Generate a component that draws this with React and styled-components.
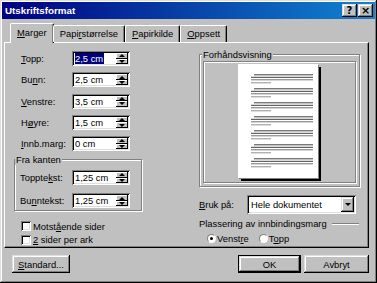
import React from 'react';
import styled, { createGlobalStyle } from 'styled-components';

const GlobalStyle = createGlobalStyle`
  html, body {
    margin: 0;
    padding: 0;
    background: #c0c0c0;
  }
  body {
    font-family: "Liberation Sans", Arial, sans-serif;
    font-size: 9.4px;
    color: #000;
  }
  * { box-sizing: border-box; }
`;

const raised = `
  box-shadow: inset -1px -1px #000, inset 1px 1px #dfdfdf,
    inset -2px -2px #808080, inset 2px 2px #fff;
`;

const sunken = `
  box-shadow: inset 1px 1px #808080, inset -1px -1px #fff,
    inset 2px 2px #000, inset -2px -2px #dfdfdf;
`;

const etched = `
  border: 1px solid #808080;
  box-shadow: 1px 1px 0 #fff, inset 1px 1px 0 #fff;
`;

const Window = styled.div`
  width: 377px;
  height: 283px;
  padding: 2px;
  background: #c0c0c0;
  display: flex;
  flex-direction: column;
  ${raised}
`;

const TitleBar = styled.div`
  height: 17px;
  display: flex;
  align-items: center;
  padding: 0 2px 0 3px;
  background: linear-gradient(90deg, #000080 0%, #1084d0 100%);
  color: #fff;
  font-weight: bold;
  font-size: 9.8px;
`;

const Title = styled.span`
  flex: 1;
`;

const CaptionButton = styled.button`
  width: 15px;
  height: 13px;
  margin-left: ${(p) => (p.$gap ? '1px' : '0')};
  padding: 0;
  border: none;
  background: #c0c0c0;
  color: #000;
  font-family: "DejaVu Sans", sans-serif;
  font-weight: bold;
  font-size: ${(p) => p.$size || '10px'};
  line-height: 13px;
  text-align: center;
  ${raised}
`;

const Body = styled.div`
  flex: 1;
  display: flex;
  flex-direction: column;
  padding: 4px 6px 0 2px;
`;

const TabStrip = styled.div`
  display: flex;
  align-items: flex-end;
  padding-left: 6px;
  height: 20px;
  position: relative;
  z-index: 1;
`;

const Tab = styled.div`
  height: ${(p) => (p.$active ? '20px' : '17px')};
  padding: ${(p) => (p.$active ? '3px 6px 0' : '2px 6px 0')};
  margin: ${(p) => (p.$active ? '0 -1px 0 0' : '0 0 1px 0')};
  background: #c0c0c0;
  border-top: 1px solid #fff;
  border-left: 1px solid #fff;
  border-right: 1px solid #000;
  border-radius: 2px 2px 0 0;
  box-shadow: inset -1px 0 #808080;
  white-space: nowrap;
`;

const Key = styled.u`
  text-decoration-thickness: 1px;
  text-underline-offset: 1px;
`;

const Panel = styled.div`
  height: 206px;
  margin-top: -1px;
  border-top: 1px solid #fff;
  border-left: 1px solid #fff;
  border-right: 1px solid #000;
  border-bottom: 1px solid #000;
  box-shadow: inset -1px -1px #808080;
  display: grid;
  grid-template-columns: 128px 161px;
  column-gap: 57px;
  padding: 8px 0 0 9px;
`;

const Column = styled.div`
  display: flex;
  flex-direction: column;
  margin-top: ${(p) => p.$shift || '0'};
`;

const FieldList = styled.div`
  display: flex;
  flex-direction: column;
  gap: ${(p) => p.$gap || '6.25px'};
  padding-left: ${(p) => p.$indent || '7px'};
`;

const FieldRow = styled.div`
  display: flex;
  align-items: center;
  height: 15px;
`;

const Label = styled.span`
  width: ${(p) => p.$width || '51px'};
  flex: none;
  white-space: nowrap;
`;

const SpinBox = styled.div`
  width: 58px;
  height: 15px;
  display: flex;
  align-items: stretch;
  background: #fff;
  padding: 2px 2px 2px 3px;
  ${sunken}
`;

const SpinText = styled.span`
  flex: 1;
  display: flex;
  align-items: center;
  line-height: 11px;
`;

const Selected = styled.span`
  background: #000080;
  color: #fff;
  padding: 0 1px 0 0;
`;

const SpinButtons = styled.div`
  width: 12px;
  display: flex;
  flex-direction: column;
`;

const SpinButton = styled.div`
  flex: 1;
  background: #c0c0c0;
  display: flex;
  align-items: center;
  justify-content: center;
  box-shadow: inset -1px -1px #000, inset 1px 1px #fff;
`;

const Arrow = styled.span`
  width: 0;
  height: 0;
  border-left: 3px solid transparent;
  border-right: 3px solid transparent;
  ${(p) => (p.$down ? 'border-top: 3px solid #000;' : 'border-bottom: 3px solid #000;')}
`;

const GroupBox = styled.fieldset`
  margin: ${(p) => p.$margin || '0'};
  padding: ${(p) => p.$padding || '0'};
  min-width: 0;
  ${etched}
`;

const Legend = styled.legend`
  padding: 0 1px;
  margin-left: ${(p) => p.$offset || '0'};
  background: #c0c0c0;
  line-height: 11px;
`;

const CheckList = styled.div`
  display: flex;
  flex-direction: column;
  gap: 1.4px;
  margin-top: 9px;
  padding-left: 7px;
`;

const CheckRow = styled.label`
  display: flex;
  align-items: center;
  height: 12px;
  gap: 2px;
`;

const CheckBox = styled.span`
  width: 10px;
  height: 10px;
  background: #fff;
  ${sunken}
`;

const PreviewArea = styled.div`
  display: flex;
  justify-content: center;
  margin: 1px 3px 3px 3px;
  padding: 2px 3px 4px 0;
  ${etched}
`;

const Page = styled.div`
  width: 80px;
  height: 114px;
  background: #fff;
  box-shadow: 1px 1px 0 #808080, 3px 3px 0 #000;
`;

const SelectRow = styled.div`
  display: flex;
  align-items: center;
  margin-top: 8px;
  height: 19px;
`;

const Select = styled.div`
  width: 109px;
  height: 19px;
  display: flex;
  align-items: stretch;
  background: #fff;
  padding: 2px;
  ${sunken}
`;

const SelectText = styled.span`
  flex: 1;
  display: flex;
  align-items: center;
  padding-left: 2px;
`;

const DropButton = styled.div`
  width: 13px;
  background: #c0c0c0;
  display: flex;
  align-items: center;
  justify-content: center;
  ${raised}
`;

const SectionHead = styled.div`
  display: flex;
  align-items: center;
  margin-top: 4px;
  height: 11px;
`;

const Rule = styled.span`
  flex: 1;
  height: 2px;
  margin: 1px 1px 0 5px;
  border-top: 1px solid #808080;
  border-bottom: 1px solid #fff;
`;

const RadioRow = styled.div`
  display: flex;
  align-items: center;
  gap: 10px;
  margin-top: 4px;
  height: 11px;
  padding-left: 8px;
`;

const RadioLabel = styled.label`
  display: flex;
  align-items: center;
  gap: 1px;
`;

const Radio = styled.span`
  width: 9px;
  height: 9px;
  border-radius: 50%;
  background: #fff;
  border: 1px solid;
  border-color: #808080 #fff #fff #808080;
  display: flex;
  align-items: center;
  justify-content: center;
  &::after {
    content: '';
    width: 3px;
    height: 3px;
    border-radius: 50%;
    background: ${(p) => (p.$checked ? '#000' : 'transparent')};
  }
`;

const ButtonRow = styled.div`
  display: flex;
  align-items: center;
  margin-top: 7px;
  padding-left: 8px;
  gap: 3px;
`;

const Button = styled.button`
  width: ${(p) => p.$width};
  height: 18px;
  margin-left: ${(p) => (p.$push ? 'auto' : '0')};
  padding: 0;
  border: ${(p) => (p.$default ? '1px solid #000' : 'none')};
  background: #c0c0c0;
  font: inherit;
  color: #000;
  ${raised}
`;

const PageLines = () => {
  const groups = [10.3, 24.3, 38.3, 52.3, 66.3, 80.3, 94.3];
  return (
    <svg width="80" height="114" viewBox="0 0 80 114">
      {groups.map((y) => (
        <g key={y}>
          <rect x="16" y={y} width="59" height="1" fill="#404040" />
          <rect x="13" y={y + 2.5} width="62" height="1" fill="#404040" />
          <rect x="13" y={y + 5} width="62" height="1" fill="#707070" />
          <rect x="13" y={y + 8} width="20" height="1" fill="#909090" />
        </g>
      ))}
    </svg>
  );
};

const Spin = ({ value, selected }) => (
  <SpinBox>
    <SpinText>{selected ? <Selected>{value}</Selected> : value}</SpinText>
    <SpinButtons>
      <SpinButton><Arrow /></SpinButton>
      <SpinButton><Arrow $down /></SpinButton>
    </SpinButtons>
  </SpinBox>
);

const margins = [
  { pre: '', key: 'T', post: 'opp:', value: '2,5 cm', selected: true },
  { pre: 'Bu', key: 'n', post: 'n:', value: '2,5 cm' },
  { pre: '', key: 'V', post: 'enstre:', value: '3,5 cm' },
  { pre: 'H', key: 'ø', post: 'yre:', value: '1,5 cm' },
  { pre: '', key: 'I', post: 'nnb.marg:', value: '0 cm' },
];

const edges = [
  { pre: 'Toppte', key: 'k', post: 'st:', value: '1,25 cm' },
  { pre: 'Bu', key: 'n', post: 'ntekst:', value: '1,25 cm' },
];

export default function App() {
  return (
    <>
      <GlobalStyle />
      <Window>
        <TitleBar>
          <Title>Utskriftsformat</Title>
          <CaptionButton>?</CaptionButton>
          <CaptionButton $gap $size="11px">×</CaptionButton>
        </TitleBar>
        <Body>
          <TabStrip>
            <Tab $active><Key>M</Key>arger</Tab>
            <Tab>Papi<Key>r</Key>størrelse</Tab>
            <Tab><Key>P</Key>apirkilde</Tab>
            <Tab><Key>O</Key>ppsett</Tab>
          </TabStrip>
          <Panel>
            <Column>
              <FieldList>
                {margins.map((m) => (
                  <FieldRow key={m.post}>
                    <Label>{m.pre}<Key>{m.key}</Key>{m.post}</Label>
                    <Spin value={m.value} selected={m.selected} />
                  </FieldRow>
                ))}
              </FieldList>
              <GroupBox $margin="3px 0 0 0" $padding="5px 0 2px 0">
                <Legend>Fra kanten</Legend>
                <FieldList $gap="8.4px" $indent="5px">
                  {edges.map((m) => (
                    <FieldRow key={m.pre + m.post}>
                      <Label $width="52px">{m.pre}<Key>{m.key}</Key>{m.post}</Label>
                      <Spin value={m.value} />
                    </FieldRow>
                  ))}
                </FieldList>
              </GroupBox>
              <CheckList>
                <CheckRow><CheckBox /><span>Motst<Key>å</Key>ende sider</span></CheckRow>
                <CheckRow><CheckBox /><span><Key>2</Key> sider per ark</span></CheckRow>
              </CheckList>
            </Column>
            <Column $shift="-2px">
              <GroupBox $padding="0">
                <Legend $offset="2px">Forhåndsvisning</Legend>
                <PreviewArea>
                  <Page><PageLines /></Page>
                </PreviewArea>
              </GroupBox>
              <SelectRow>
                <Label $width="48px"><Key>B</Key>ruk på:</Label>
                <Select>
                  <SelectText>Hele dokumentet</SelectText>
                  <DropButton><Arrow $down /></DropButton>
                </Select>
              </SelectRow>
              <SectionHead>
                <span>Plassering av innbindingsmarg</span>
                <Rule />
              </SectionHead>
              <RadioRow>
                <RadioLabel><Radio $checked /><span>Venst<Key>r</Key>e</span></RadioLabel>
                <RadioLabel><Radio /><span>T<Key>o</Key>pp</span></RadioLabel>
              </RadioRow>
            </Column>
          </Panel>
          <ButtonRow>
            <Button $width="58px"><Key>S</Key>tandard...</Button>
            <Button $width="63px" $push $default>OK</Button>
            <Button $width="65px">Avbryt</Button>
          </ButtonRow>
        </Body>
      </Window>
    </>
  );
}
